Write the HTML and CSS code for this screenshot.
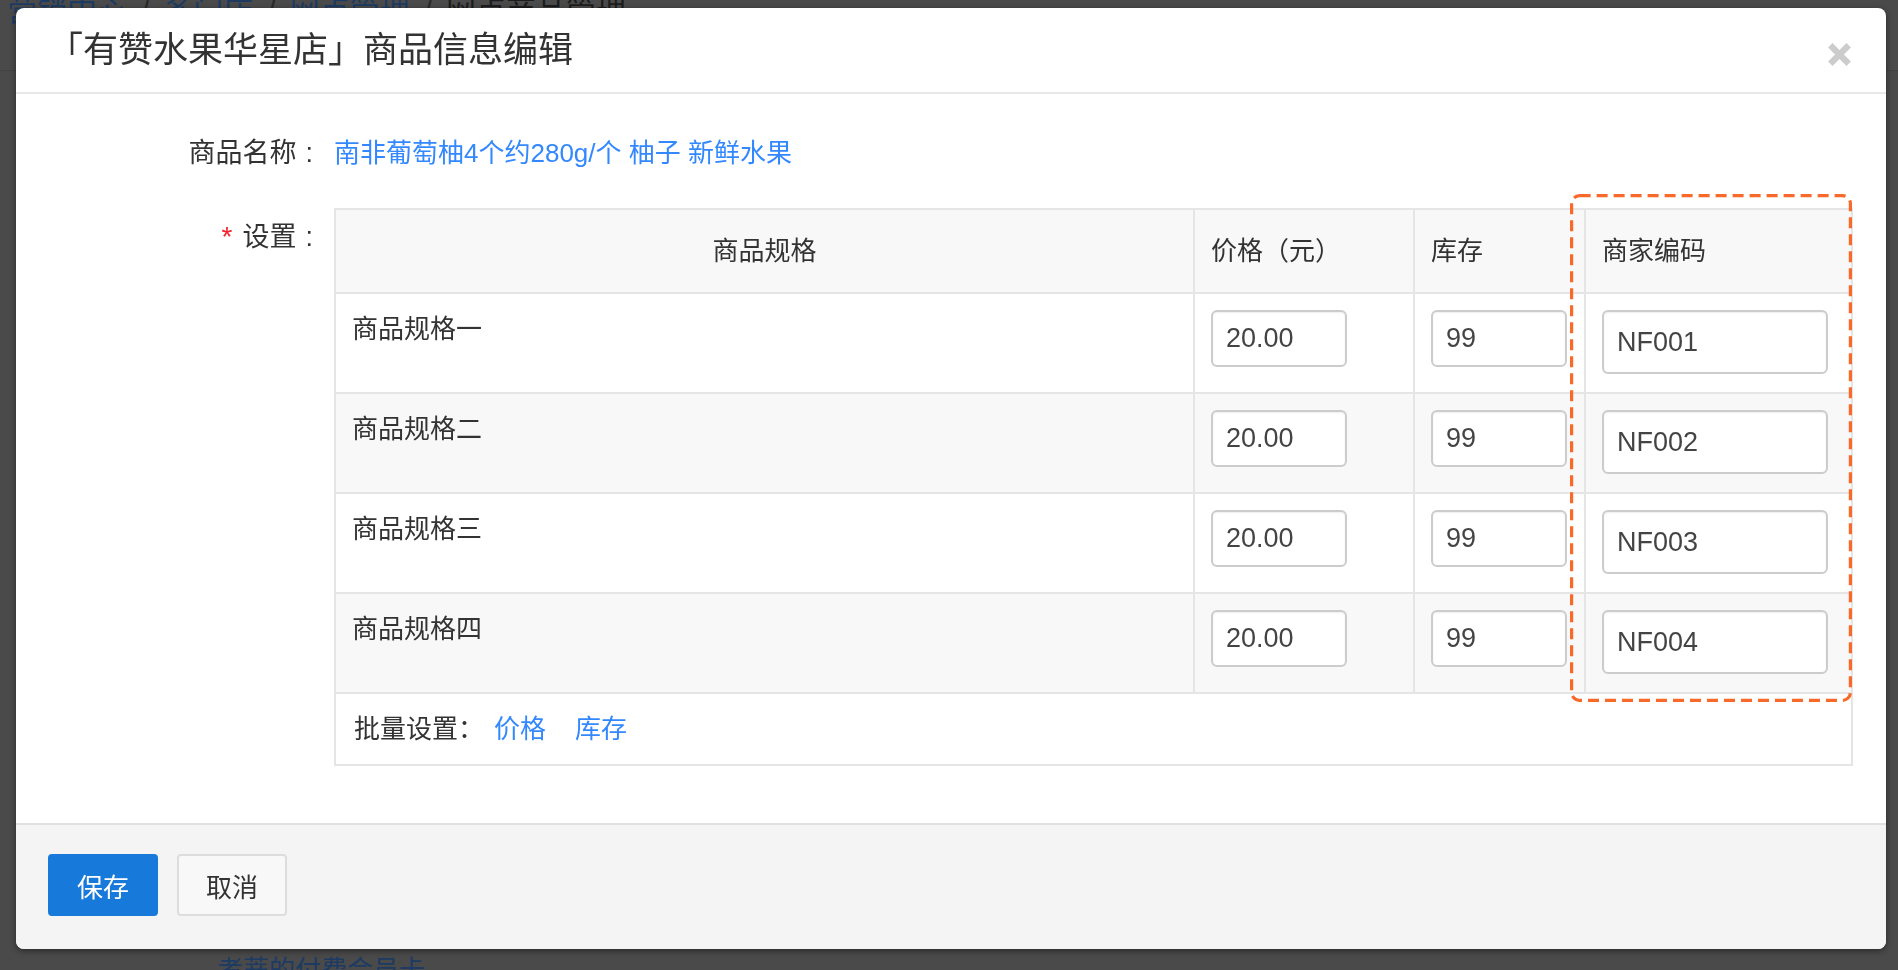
FILE: index.html
```html
<!DOCTYPE html>
<html lang="zh-CN">
<head>
<meta charset="utf-8">
<title>商品信息编辑</title>
<link rel="stylesheet" href="styles.css">
</head>
<body>
  <div class="page">
    <div class="page-top">
      <nav class="crumbs">
        <a class="crumb">营销中心</a><span class="sep">/</span>
        <a class="crumb">多门店</a><span class="sep">/</span>
        <a class="crumb">网点管理</a><span class="sep">/</span>
        <span class="crumb-cur">网点商品管理</span>
      </nav>
    </div>
    <div class="page-bottom"><a class="crumb">考蒂的付费会员卡</a></div>
  </div>

  <div class="modal">
    <div class="modal-header">
      <h3 class="modal-title">「有赞水果华星店」商品信息编辑</h3>
      <button class="close" type="button" aria-label="关闭">
        <svg viewBox="0 0 23 23" width="23" height="23"><path d="M2.3 2.3 L20.7 20.7 M20.7 2.3 L2.3 20.7" stroke="#cccccc" stroke-width="6.2" fill="none"/></svg>
      </button>
    </div>

    <div class="modal-body">
      <div class="form-row">
        <label class="form-label">商品名称<span class="colon">:</span></label>
        <div class="form-control"><a class="link">南非葡萄柚4个约280g/个 柚子 新鲜水果</a></div>
      </div>

      <div class="form-row form-row-table">
        <label class="form-label"><em class="req">*</em>设置<span class="colon">:</span></label>
        <div class="form-control sku-wrap">
          <table class="sku-table">
            <colgroup>
              <col class="c-name"><col class="c-price"><col class="c-stock"><col class="c-code">
            </colgroup>
            <thead>
              <tr>
                <th class="th-center">商品规格</th>
                <th>价格（元）</th>
                <th>库存</th>
                <th>商家编码</th>
              </tr>
            </thead>
            <tbody>
              <tr>
                <td>商品规格一</td>
                <td><input class="input" value="20.00"></td>
                <td><input class="input" value="99"></td>
                <td><input class="input input-code" value="NF001"></td>
              </tr>
              <tr>
                <td>商品规格二</td>
                <td><input class="input" value="20.00"></td>
                <td><input class="input" value="99"></td>
                <td><input class="input input-code" value="NF002"></td>
              </tr>
              <tr>
                <td>商品规格三</td>
                <td><input class="input" value="20.00"></td>
                <td><input class="input" value="99"></td>
                <td><input class="input input-code" value="NF003"></td>
              </tr>
              <tr>
                <td>商品规格四</td>
                <td><input class="input" value="20.00"></td>
                <td><input class="input" value="99"></td>
                <td><input class="input input-code" value="NF004"></td>
              </tr>
              <tr class="batch">
                <td colspan="4">批量设置：<a class="link batch-link">价格</a><a class="link batch-link">库存</a></td>
              </tr>
            </tbody>
          </table>
          <svg class="highlight" width="282" height="508" viewBox="0 0 282 508">
            <rect x="1.6" y="1.6" width="278.8" height="504.8" rx="8" ry="8" fill="none" stroke="#f8692a" stroke-width="3.2" stroke-dasharray="11 6"/>
          </svg>
        </div>
      </div>
    </div>

    <div class="modal-footer">
      <button class="btn btn-primary" type="button">保存</button>
      <button class="btn" type="button">取消</button>
    </div>
  </div>
</body>
</html>
```
FILE: styles.css
```css
* { box-sizing: border-box; }

html, body {
  margin: 0;
  padding: 0;
}

body {
  width: 1898px;
  height: 970px;
  overflow: hidden;
  background: #4a4a4a;
  font-family: "Liberation Sans", "Noto Sans CJK SC", sans-serif;
  color: #333;
}

/* background page (under the mask) */
.page {
  height: 970px;
  display: flex;
  flex-direction: column;
  justify-content: space-between;
}

.page-top {
  height: 71px;
  border-bottom: 1px solid #424242;
  padding-left: 7px;
}

.crumbs {
  display: flex;
  margin-top: -9px;
  font-size: 30px;
  line-height: 40px;
  white-space: nowrap;
}

.crumb { color: #1d3b62; }
.crumb-cur { color: #1c1c1c; }
.sep { margin: 0 14px; color: #2a2a2a; }

.page-bottom {
  padding-left: 217px;
  margin-bottom: -19px;
  font-size: 26px;
  line-height: 38px;
}

/* modal */
.modal {
  position: fixed;
  left: 16px;
  top: 8px;
  width: 1870px;
  height: 941px;
  background: #fff;
  border-radius: 8px;
  box-shadow: 0 2px 6px rgba(0, 0, 0, 0.45);
  display: flex;
  flex-direction: column;
  overflow: hidden;
}

.modal-header {
  position: relative;
  flex: none;
  height: 86px;
  padding: 0 32px;
  display: flex;
  align-items: center;
  border-bottom: 2px solid #e8e8e8;
}

.modal-title {
  margin: 0;
  font-size: 35px;
  font-weight: normal;
  line-height: 1.2;
  color: #333;
}

.close {
  position: absolute;
  right: 35px;
  top: 35px;
  width: 23px;
  height: 23px;
  padding: 0;
  border: 0;
  background: none;
  display: block;
}

.close svg { display: block; }

.modal-body {
  flex: 1;
  padding: 40px 35px 0 0;
}

.form-row {
  display: grid;
  grid-template-columns: 297px 1fr;
  column-gap: 21px;
}

.form-row + .form-row { margin-top: 35px; }

.form-label {
  text-align: right;
  font-size: 27px;
  line-height: 39px;
  color: #333;
}

.form-row-table .form-label { padding-top: 9px; }

.colon { margin-left: 9px; }

.req {
  font-style: normal;
  color: #f5222d;
  font-size: 28px;
  margin-right: 10px;
}

.form-control {
  font-size: 26px;
  line-height: 39px;
}

.link {
  color: #3388ff;
  text-decoration: none;
}

/* sku table */
.sku-wrap { position: relative; }

.sku-table {
  width: 1517px;
  border-collapse: collapse;
  table-layout: fixed;
  font-size: 26px;
  line-height: 39px;
  color: #333;
}

.c-name { width: 859px; }
.c-price { width: 220px; }
.c-stock { width: 171px; }
.c-code { width: 267px; }

.sku-table th,
.sku-table td {
  border: 2px solid #e5e5e5;
}

.sku-table th {
  height: 84px;
  padding: 0 16px;
  background: #f8f8f8;
  font-weight: normal;
  text-align: left;
}

.sku-table th.th-center { text-align: center; }

.sku-table td {
  height: 100px;
  padding: 16px;
  vertical-align: top;
  background: #fff;
}

.sku-table tbody tr:nth-child(even) td { background: #f8f8f8; }

.sku-table .batch td {
  height: 72px;
  padding: 0 18px;
  vertical-align: middle;
  background: #fff;
}

.batch-link { margin-left: 10px; }
.batch-link + .batch-link { margin-left: 29px; }

.input {
  display: block;
  width: 136px;
  height: 57px;
  margin: 0;
  padding: 0 13px;
  border: 2px solid #cccccc;
  border-radius: 6px;
  background: #fff;
  box-shadow: inset 0 1px 2px rgba(0, 0, 0, 0.07);
  font-family: "Liberation Sans", sans-serif;
  font-size: 27px;
  color: #444;
  outline: none;
}

.input-code {
  width: 226px;
  height: 64px;
}

.highlight {
  position: absolute;
  left: 1236px;
  top: -14px;
  pointer-events: none;
}

/* footer */
.modal-footer {
  flex: none;
  height: 126px;
  padding: 29px 32px 0;
  display: flex;
  align-items: flex-start;
  gap: 19px;
  background: #f4f4f4;
  border-top: 2px solid #e0e0e0;
}

.btn {
  width: 110px;
  height: 62px;
  padding: 0;
  border: 2px solid #dddddd;
  border-radius: 4px;
  background: #f8f8f8;
  color: #333;
  font-family: "Liberation Sans", "Noto Sans CJK SC", sans-serif;
  font-size: 26px;
}

.btn-primary {
  background: #1779d9;
  border-color: #1779d9;
  color: #fff;
}
```
